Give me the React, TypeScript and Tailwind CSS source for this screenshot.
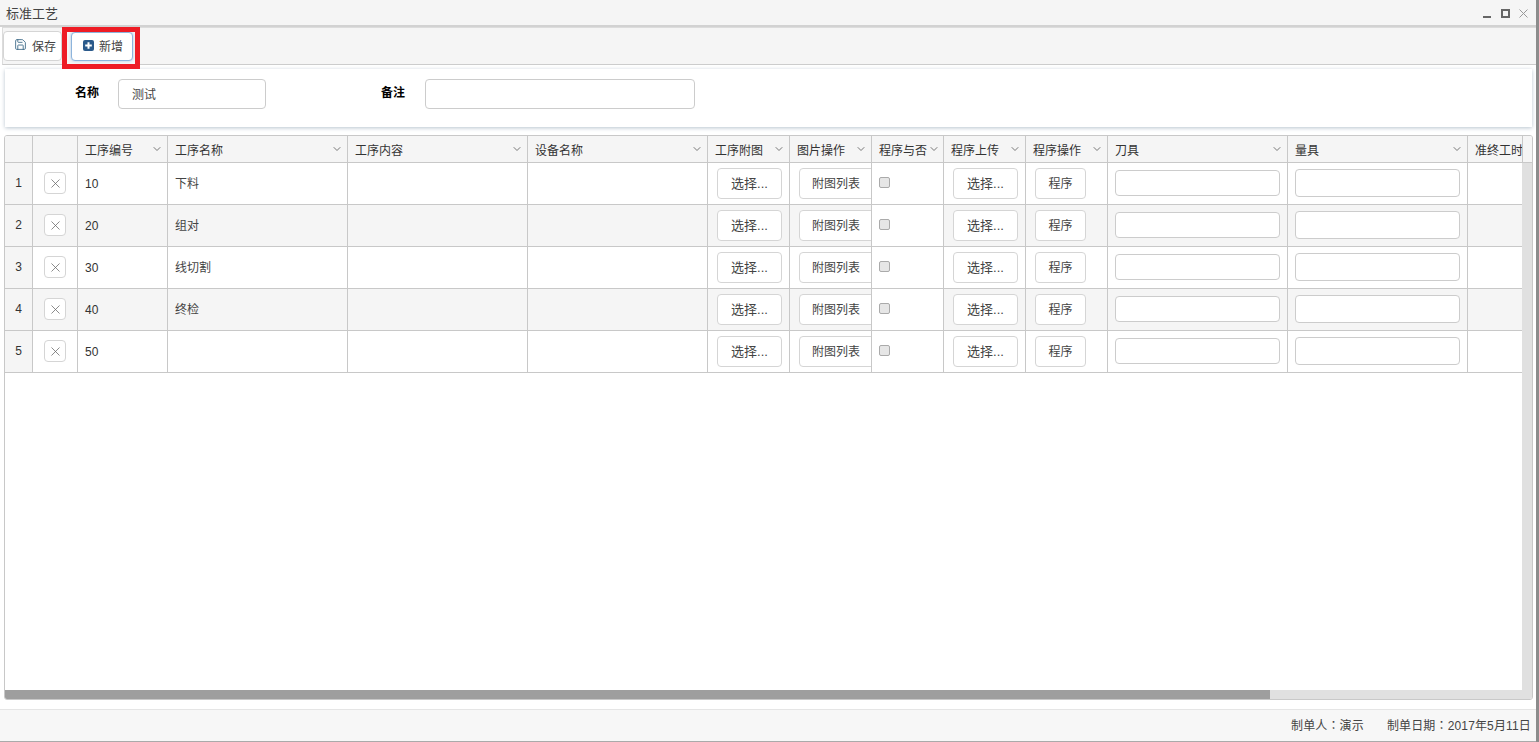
import { Save, X, ChevronDown } from "lucide-react";

const columns = [
  { label: "", width: "w-[28px]", sort: false },
  { label: "", width: "w-[45px]", sort: false },
  { label: "工序编号", width: "w-[90px]", sort: true },
  { label: "工序名称", width: "w-[180px]", sort: true },
  { label: "工序内容", width: "w-[180px]", sort: true },
  { label: "设备名称", width: "w-[180px]", sort: true },
  { label: "工序附图", width: "w-[82px]", sort: true },
  { label: "图片操作", width: "w-[82px]", sort: true },
  { label: "程序与否", width: "w-[72px]", sort: true },
  { label: "程序上传", width: "w-[82px]", sort: true },
  { label: "程序操作", width: "w-[82px]", sort: true },
  { label: "刀具", width: "w-[180px]", sort: true },
  { label: "量具", width: "w-[180px]", sort: true },
  { label: "准终工时", width: "w-[55px]", sort: false },
];

const rows = [
  { no: 1, code: "10", name: "下料" },
  { no: 2, code: "20", name: "组对" },
  { no: 3, code: "30", name: "线切割" },
  { no: 4, code: "40", name: "终检" },
  { no: 5, code: "50", name: "" },
];

const cellBtn =
  "h-[31px] rounded-[4px] border border-[#d5d5d5] bg-white text-[#444] flex items-center justify-center";

const Cell = ({ className, children }: { className: string; children?: React.ReactNode }) => (
  <div className={`h-full shrink-0 border-r border-[#c8c8c8] overflow-hidden ${className}`}>{children}</div>
);

const Row = ({ no, code, name }: (typeof rows)[number]) => (
  <div className={`flex h-[42px] border-b border-[#c8c8c8] ${no % 2 === 0 ? "bg-[#f5f5f5]" : "bg-white"}`}>
    <Cell className="w-[28px] bg-[#f5f5f5] flex items-center justify-center text-[12px] pb-[2px]">{no}</Cell>
    <Cell className="w-[45px] pl-[11px] pt-[9px]">
      <div className="w-[22px] h-[22px] rounded-[4px] border border-[#d5d5d5] bg-white flex items-center justify-center">
        <X size={15} strokeWidth={1.2} className="text-[#666]" />
      </div>
    </Cell>
    <Cell className="w-[90px] pl-[7px] pt-[13px] text-[12px] leading-[16px]">{code}</Cell>
    <Cell className="w-[180px] pl-[7px] pt-[13px] text-[12px] leading-[16px] text-[#444]">{name}</Cell>
    <Cell className="w-[180px]" />
    <Cell className="w-[180px]" />
    <Cell className="w-[82px] pl-[9px] pt-[5px]">
      <div className={`${cellBtn} w-[65px] text-[13px]`}>选择...</div>
    </Cell>
    <Cell className="w-[81px] pl-[9px] pt-[5px] border-r-0">
      <div className={`${cellBtn} w-[78px] pr-[4px] text-[12px]`}>附图列表</div>
    </Cell>
    <Cell className="w-[73px] bg-white border-l border-[#c8c8c8] pl-[7px] pt-[14px]">
      <div className="w-[11px] h-[11px] rounded-[2px] border border-[#aaa] bg-[#e6e6e6]" />
    </Cell>
    <Cell className="w-[82px] pl-[9px] pt-[5px]">
      <div className={`${cellBtn} w-[65px] text-[13px]`}>选择...</div>
    </Cell>
    <Cell className="w-[82px] pl-[9px] pt-[5px]">
      <div className={`${cellBtn} w-[51px] text-[12px]`}>程序</div>
    </Cell>
    <Cell className="w-[180px] pl-[7px] pt-[7px]">
      <div className="w-[165px] h-[26px] rounded-[4px] border border-[#ccc] bg-white" />
    </Cell>
    <Cell className="w-[180px] pl-[7px] pt-[6px]">
      <div className="w-[165px] h-[28px] rounded-[4px] border border-[#ccc] bg-white" />
    </Cell>
    <div className="w-[55px] shrink-0 h-full" />
  </div>
);

export default function App() {
  return (
    <div
      className="relative flex w-[1539px] h-[742px] overflow-hidden text-[#333]"
      style={{ fontFamily: '"Liberation Sans", "Noto Sans CJK SC", sans-serif' }}
    >
      <div className="flex flex-col w-[1536px] h-full bg-white border-b border-[#aaa]">
        {/* title bar */}
        <div className="flex items-center justify-between h-[27px] shrink-0 bg-[#f5f5f5] border-b-2 border-[#d2d2d2] pl-[6px] pr-[8px]">
          <span className="text-[13px] text-[#444] pt-[3px]">标准工艺</span>
          <div className="flex items-center gap-[9px] pt-[1px]">
            <div className="w-[8px] h-[9px] mr-[1px] flex items-end">
              <div className="w-full h-[2px] bg-[#666]" />
            </div>
            <div className="w-[9px] h-[9px] border-2 border-[#666]" />
            <svg width="9" height="9" viewBox="0 0 9 9" className="text-[#999]">
              <path d="M0.5 0.5l8 8M8.5 0.5l-8 8" stroke="currentColor" strokeWidth="1" />
            </svg>
          </div>
        </div>

        {/* toolbar */}
        <div className="flex items-center gap-[9px] h-[38px] shrink-0 ml-[2px] bg-[#f5f5f5] border-t border-l border-b border-[#dcdcdc] border-b-[#ccc]">
          <div className="flex items-center gap-[5px] w-[59px] h-[30px] pl-[10px] pt-[1px] rounded-[4px] border border-[#d5d5d5] bg-white text-[12px] text-[#444]">
            <Save size={13} strokeWidth={1.5} className="text-[#2f5f7f] shrink-0 mb-[4px]" />
            保存
          </div>
          <div className="flex items-center gap-[5px] w-[62px] h-[29px] pl-[11px] pt-[1px] rounded-[4px] border border-[#8db4dc] bg-white text-[12px] text-[#444] shadow-[0_0_3px_#a9c8e8]">
            <svg width="11" height="11" viewBox="0 0 11 11" className="shrink-0 mb-[3px]">
              <rect width="11" height="11" rx="2" fill="#2b5a8b" />
              <path d="M5.5 2.2v6.6M2.2 5.5h6.6" stroke="#fff" strokeWidth="2" />
            </svg>
            新增
          </div>
        </div>

        {/* form */}
        <div className="flex h-[58px] shrink-0 mt-[4px] ml-[5px] mr-[4px] bg-white shadow-[0_1px_4px_#b8c4cf] pt-[10px] text-[12px]">
          <span className="ml-[70px] w-[43px] pt-[6px] font-bold text-black leading-[16px]">名称</span>
          <div className="w-[148px] h-[30px] rounded-[4px] border border-[#ccc] pl-[13px] pt-[2px] flex items-center text-[#444]">
            测试
          </div>
          <span className="ml-[115px] w-[44px] pt-[6px] font-bold text-black leading-[16px]">备注</span>
          <div className="w-[270px] h-[30px] rounded-[4px] border border-[#ccc]" />
        </div>

        {/* grid */}
        <div className="relative flex flex-col h-[565px] shrink-0 mt-[8px] ml-[4px] mr-[3px] rounded-[3px] border border-[#c8c8c8] overflow-hidden">
          <div className="flex h-[27px] shrink-0 bg-[#f5f5f5] border-b border-[#c8c8c8] overflow-hidden">
            {columns.map((col, i) => (
              <div
                key={i}
                className={`flex items-center justify-between shrink-0 border-r border-[#c8c8c8] overflow-hidden whitespace-nowrap text-[12px] ${col.width} ${
                  col.sort ? (col.width === "w-[72px]" ? "pl-[7px] pr-[3px]" : "pl-[7px] pr-[4px]") : "pl-[7px]"
                }`}
              >
                <span className="pt-[3px]">{col.label}</span>
                {col.sort && <ChevronDown size={12} strokeWidth={2} className="text-[#777] shrink-0" />}
              </div>
            ))}
          </div>
          <div className="flex flex-1 min-h-0">
            <div className="flex flex-col flex-1 min-w-0 overflow-hidden">
              {rows.map((row) => (
                <div key={row.no} className="w-[1518px]">
                  <Row {...row} />
                </div>
              ))}
            </div>
            <div className="w-[10px] shrink-0 bg-[#e0e0e0]" />
          </div>
          <div className="flex h-[9px] shrink-0 bg-[#e0e0e0]">
            <div className="w-[1265px] bg-[#9e9e9e]" />
          </div>
        </div>

        {/* footer */}
        <div className="flex items-center justify-end gap-[23px] flex-1 mt-[9px] bg-[#f7f7f7] border-t border-[#e5e5e5] pr-[5px] pb-[1px] text-[12px] text-[#444] tracking-[0.15px]">
          <span>
            制单人<span className="font-['Noto_Sans_CJK_TC',sans-serif]">：</span>演示
          </span>
          <span>
            制单日期<span className="font-['Noto_Sans_CJK_TC',sans-serif]">：</span>2017年5月11日
          </span>
        </div>
      </div>
      <div className="flex-1 bg-[#8c8c8c]" />

      {/* red annotation */}
      <div className="absolute left-[62px] top-[27px] w-[78px] h-[42px] border-[5px] border-[#ee1c25]" />
    </div>
  );
}
